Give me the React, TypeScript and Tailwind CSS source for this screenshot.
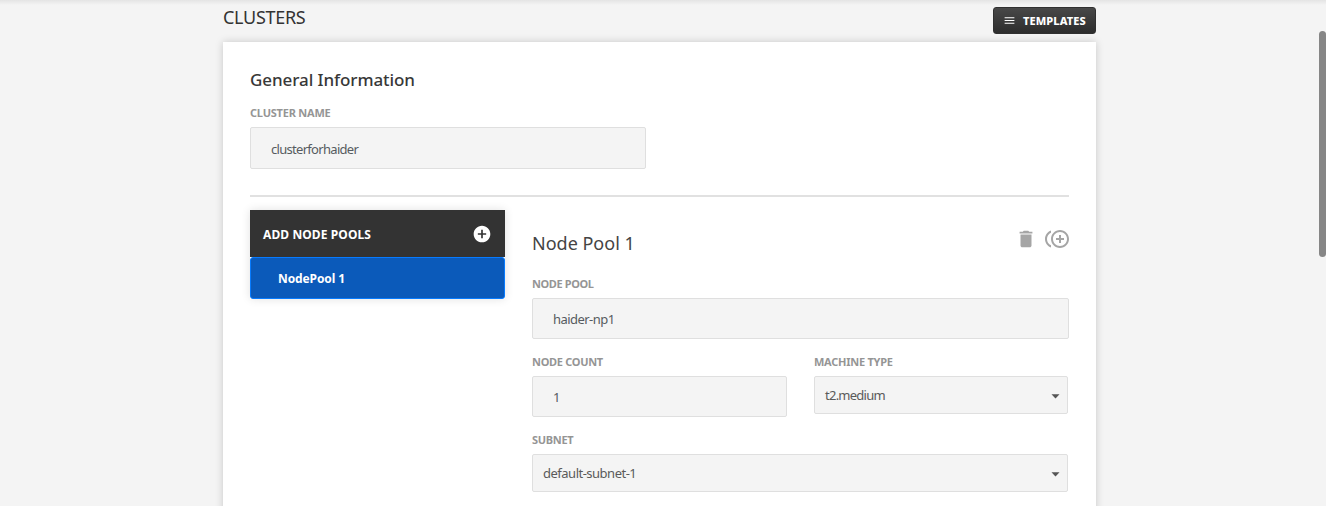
import React from "react";
import { MdAddCircle, MdControlPointDuplicate, MdDelete, MdMenu } from "react-icons/md";

function Label({ children, className = "" }: { children: React.ReactNode; className?: string }) {
  return (
    <div className={`h-[14px] whitespace-nowrap text-[11px] leading-[14px] font-bold text-[#959595] ${className}`}>
      {children}
    </div>
  );
}

function Select({ value, spacing }: { value: string; spacing: string }) {
  return (
    <button className="flex h-[38px] w-full items-center justify-between rounded-[2px] border border-[#dfdfdf] bg-[#f4f4f4] pr-[7px] pl-[10px] text-[13px] text-[#5a5a5a]">
      <span className={`mt-[2px] ${spacing}`}>{value}</span>
      <svg width="9" height="5" viewBox="0 0 9 5" className="mt-[2px]">
        <path d="M0.5 0.3h8L4.5 4.6z" fill="#555" />
      </svg>
    </button>
  );
}

function Input({ value, className }: { value: string; className: string }) {
  return (
    <input
      defaultValue={value}
      className={`block rounded-[2px] border border-[#dfdfdf] bg-[#f4f4f4] px-5 text-[13px] text-[#565b60] outline-none ${className}`}
    />
  );
}

export default function App() {
  return (
    <div className="relative h-[506px] overflow-hidden bg-[#f4f4f4] font-['Noto_Sans',sans-serif]">
      <div className="absolute inset-x-0 top-0 h-[5px] bg-linear-to-b from-[#e4e4e4] to-[#f4f4f4]" />
      <div className="absolute top-[31px] right-0 h-[226px] w-[7px] rounded-full bg-[#868686]" />

      <div className="ml-[223px] w-[873px]">
        <header className="flex h-[42px] items-start justify-between">
          <h1 className="mt-[5px] text-[18px] leading-6 tracking-[-0.3px] text-[#333]">CLUSTERS</h1>
          <button className="mt-[7px] flex h-[27px] w-[103px] items-center rounded-[3px] border border-[#303030] bg-linear-to-b from-[#484848] to-[#2d2d2d] pl-[9px] text-white">
            <MdMenu size={13} />
            <span className="mt-px ml-[7px] text-[11px] font-extrabold tracking-[0.1px]">TEMPLATES</span>
          </button>
        </header>

        <main className="h-[490px] bg-white px-[27px] pt-[26px] shadow-[0_0_8px_rgba(0,0,0,0.18)]">
          <h2 className="h-6 text-[17px] leading-6 font-medium tracking-[-0.08px] text-[#383838]">General Information</h2>
          <Label className="mt-[14px] tracking-[-0.22px]">CLUSTER NAME</Label>
          <Input value="clusterforhaider" className="mt-[7px] h-[42px] w-[396px] pt-[2px] tracking-[-0.7px]" />
          <div className="mt-[26px] h-[2px] bg-[#e1e1e1]" />

          <div className="mt-[13px] flex gap-[27px]">
            <aside className="h-[89px] w-[255px] shrink-0 rounded-b-[3px] shadow-[0_0_10px_rgba(0,0,0,0.12)]">
              <div className="flex h-[47px] items-center justify-between bg-[#333] pr-[13px] pl-[13px] text-white">
                <span className="mt-[2px] text-[12px] font-bold tracking-[0.1px]">ADD NODE POOLS</span>
                <MdAddCircle size={20} />
              </div>
              <div className="flex h-[42px] items-center rounded-[3px] border border-[#077bff] bg-[#0b5aba] pt-[2px] pl-[27px] text-[12px] font-bold tracking-[-0.1px] text-white">
                NodePool 1
              </div>
            </aside>

            <section className="w-[537px]">
              <div className="flex h-[67px] items-start justify-between">
                <h3 className="mt-[21px] text-[18px] leading-6 text-[#444]">Node Pool 1</h3>
                <div className="mt-[17px] flex items-center gap-[8px] text-[#a5a5a5]">
                  <MdDelete size={22} />
                  <MdControlPointDuplicate size={24} />
                </div>
              </div>
              <Label className="tracking-[-0.4px]">NODE POOL</Label>
              <Input value="haider-np1" className="mt-[7px] h-[41px] w-[537px] tracking-[-0.55px]" />
              <div className="mt-[16px] flex gap-[27px]">
                <div className="w-[255px]">
                  <Label className="tracking-[-0.3px]">NODE COUNT</Label>
                  <Input value="1" className="mt-[7px] h-[41px] w-[255px]" />
                </div>
                <div className="w-[254px]">
                  <Label className="tracking-[-0.25px]">MACHINE TYPE</Label>
                  <div className="mt-[7px]">
                    <Select value="t2.medium" spacing="tracking-[-0.75px]" />
                  </div>
                </div>
              </div>
              <Label className="mt-[16px] tracking-[-0.3px]">SUBNET</Label>
              <div className="mt-[7px] w-[536px]">
                <Select value="default-subnet-1" spacing="tracking-[-0.5px]" />
              </div>
            </section>
          </div>
        </main>
      </div>
    </div>
  );
}
